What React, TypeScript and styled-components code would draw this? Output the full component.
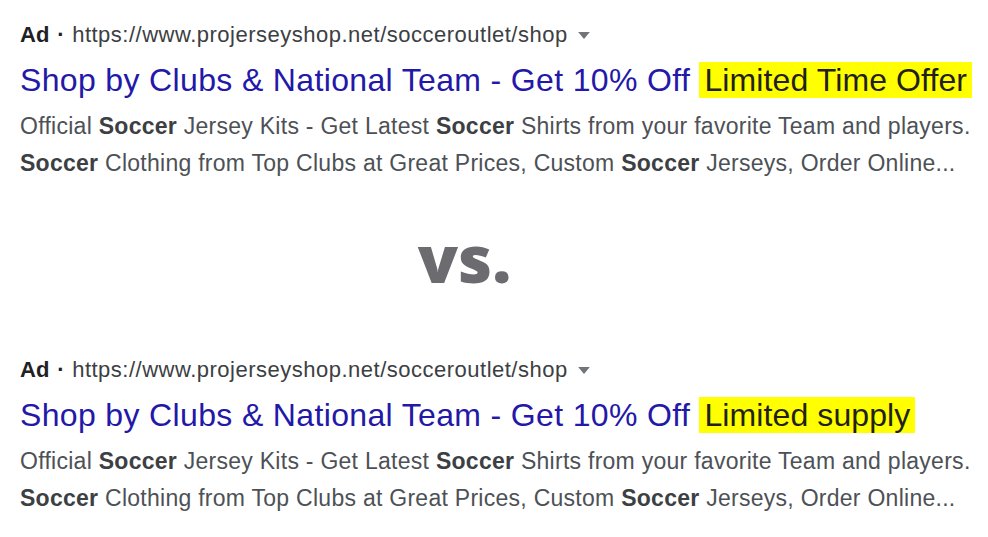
import styled, { createGlobalStyle } from "styled-components"

const Global = createGlobalStyle`
    html, body {
        margin: 0;
        padding: 0;
        background: #ffffff;
    }
`

type AdProps = {
    highlight: string
}

function AdResult({ highlight }: AdProps) {
    return <Result>
        <UrlLine>
            <AdLabel>Ad</AdLabel>
            <Dot>·</Dot>
            <Url>https://www.projerseyshop.net/socceroutlet/shop</Url>
            <Caret viewBox="0 0 10 6">
                <path d="M0 0 L10 0 L5 6 Z" fill="#70757a"/>
            </Caret>
        </UrlLine>
        <Title>
            Shop by Clubs &amp; National Team - Get 10% Off <Highlight>{highlight}</Highlight>
        </Title>
        <Description>
            Official <b>Soccer</b> Jersey Kits - Get Latest <b>Soccer</b> Shirts from your favorite Team and players.
        </Description>
        <Description>
            <b>Soccer</b> Clothing from Top Clubs at Great Prices, Custom <b>Soccer</b> Jerseys, Order Online...
        </Description>
    </Result>
}

export default function App() {
    return <Page>
        <Global/>
        <AdResult highlight="Limited Time Offer"/>
        <Versus>vs.</Versus>
        <AdResult highlight="Limited supply"/>
    </Page>
}

const Page = styled.div`
    width: 988px;
    height: 537px;
    overflow: hidden;
    padding: 17px 0 0 20px;
    box-sizing: border-box;
    font-family: "Liberation Sans", Arial, sans-serif;
`

const Result = styled.div`
    display: flex;
    flex-direction: column;
`

const UrlLine = styled.div`
    display: flex;
    align-items: baseline;
    line-height: 36px;
    font-size: 22px;
    letter-spacing: 0.5px;
    color: #202124;
`

const AdLabel = styled.span`
    font-weight: 700;
    letter-spacing: 0;
`

const Dot = styled.span`
    margin: 0 7px 0 8px;
    font-weight: 700;
`

const Url = styled.span`
    color: #3c4043;
`

const Caret = styled.svg`
    width: 12px;
    height: 7px;
    margin-left: 10px;
    align-self: center;
`

const Title = styled.div`
    line-height: 55px;
    font-size: 32px;
    letter-spacing: 0.35px;
    color: #2318a8;
    white-space: pre;
`

const Highlight = styled.span`
    display: inline-block;
    background: #ffff00;
    color: #231f1a;
    padding: 0 5px;
    letter-spacing: 0.1px;
    line-height: 36px;
`

const Description = styled.div`
    line-height: 37px;
    font-size: 23px;
    letter-spacing: 0.27px;
    color: #4d5156;
    white-space: pre;

    b {
        font-weight: 700;
        color: #3c4043;
    }
`

const Versus = styled.div`
    height: 170px;
    box-sizing: border-box;
    margin-left: -20px;
    padding: 42px 59px 0 0;
    text-align: center;
    line-height: 66px;
    font-family: "Open Sans", sans-serif;
    font-weight: 800;
    font-size: 66px;
    color: #6b6b70;
`
